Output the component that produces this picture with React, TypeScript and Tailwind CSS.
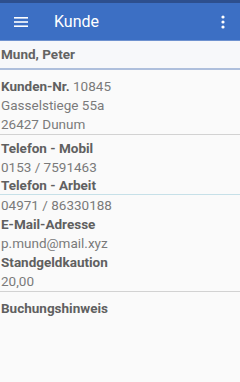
import { FC } from "react";

const font = { fontFamily: "Roboto, 'Noto Sans', Arial, sans-serif" };

const Label: FC<{ text: string; className?: string }> = ({ text, className }) => (
  <div className={`h-[19px] leading-[19px] font-bold text-[#606060] ${className ?? ""}`}>{text}</div>
);

const Value: FC<{ text: string }> = ({ text }) => (
  <div className="h-[19px] leading-[19px] text-[#7a7a7a]">{text}</div>
);

const App: FC = () => {
  return (
    <div className="min-h-screen w-[240px] bg-[#fafafa] text-[13.5px]" style={font}>
      {/* status strip */}
      <div className="h-[3px] bg-[#2d4f8e]" />
      {/* app bar */}
      <div className="h-[38px] bg-[#3c6fc4] flex items-center border-b border-[#6f92cf]">
        <svg width="14" height="12" viewBox="0 0 14 12" className="ml-[14px]">
          <rect x="0" y="1" width="14" height="1.6" fill="#fff" />
          <rect x="0" y="5.2" width="14" height="1.6" fill="#fff" />
          <rect x="0" y="9.4" width="14" height="1.6" fill="#fff" />
        </svg>
        <span className="ml-[26px] text-[16px] text-white">Kunde</span>
        <svg width="4" height="14" viewBox="0 0 4 14" className="ml-auto mr-[15px]">
          <circle cx="2" cy="2" r="1.6" fill="#fff" />
          <circle cx="2" cy="7" r="1.6" fill="#fff" />
          <circle cx="2" cy="12" r="1.6" fill="#fff" />
        </svg>
      </div>
      {/* name bar */}
      <div className="h-[29px] leading-[27px] bg-[#f7f8fa] font-bold text-[#636363] px-[1px] border-b-2 border-[#aebfdc]">
        Mund, Peter
      </div>
      {/* address */}
      <div className="pt-[7px] px-[1px]">
        <div className="h-[19px] leading-[19px] text-[#7a7a7a]">
          <span className="font-bold text-[#606060]">Kunden-Nr.</span> 10845
        </div>
        <Value text="Gasselstiege 55a" />
        <Value text="26427 Dunum" />
      </div>
      <div className="h-px bg-[#d2d2d2]" />
      {/* contact */}
      <div className="pt-[4px] px-[1px]">
        <Label text="Telefon - Mobil" />
        <Value text="0153 / 7591463" />
        <div className="h-[17px] leading-[17px] font-bold text-[#606060]">Telefon - Arbeit</div>
      </div>
      <div className="h-px bg-[#c6e0e8]" />
      <div className="pt-[1px] px-[1px]">
        <Value text="04971 / 86330188" />
        <Label text="E-Mail-Adresse" />
        <Value text="p.mund@mail.xyz" />
        <Label text="Standgeldkaution" />
        <Value text="20,00" />
      </div>
      <div className="h-px bg-[#d2d2d2]" />
      <div className="pt-[7px] px-[1px]">
        <Label text="Buchungshinweis" />
      </div>
    </div>
  );
};

export default App;
